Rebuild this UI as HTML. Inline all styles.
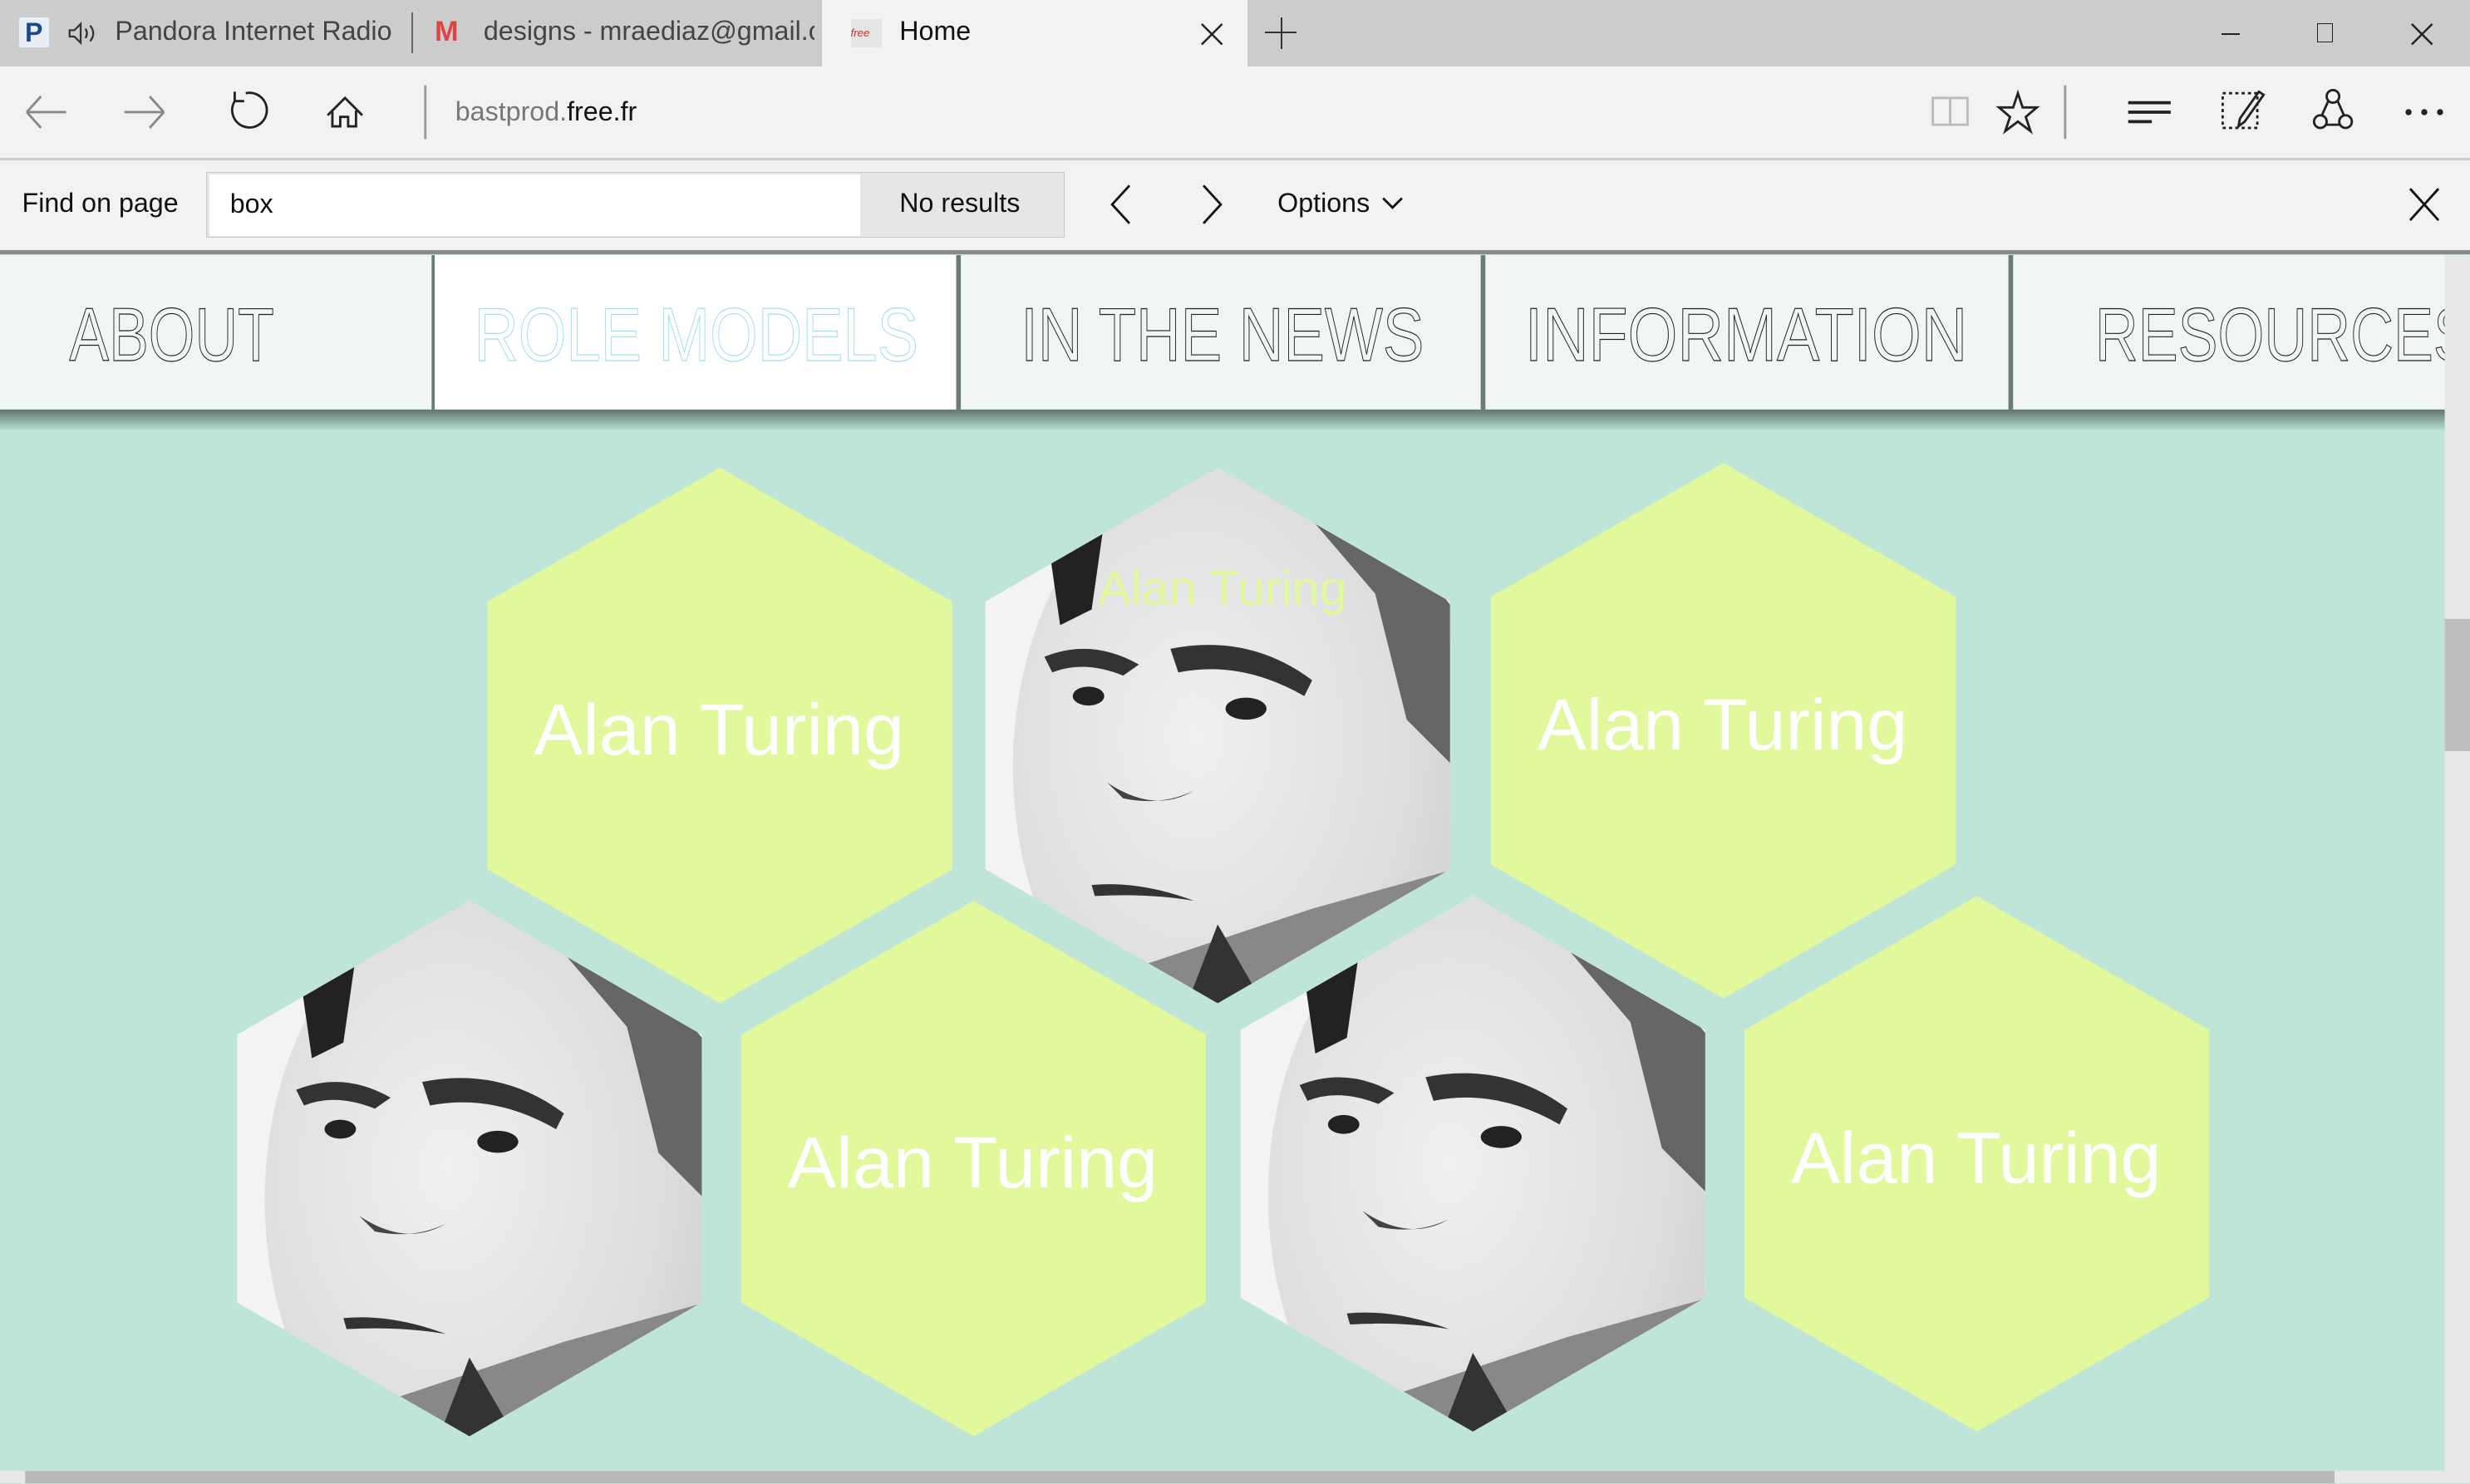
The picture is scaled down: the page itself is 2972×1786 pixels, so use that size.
<!DOCTYPE html>
<html><head><meta charset="utf-8"><style>
html,body{margin:0;padding:0;overflow:hidden;background:#bfe5d8;}
#w{zoom:1.8954;width:1568px;height:942px;position:relative;overflow:hidden;font-family:"Liberation Sans",sans-serif;}
.abs{position:absolute;}
#tabs{left:0;top:0;width:1568px;height:42px;background:#cccccc;}
#tb{left:0;top:42px;width:1568px;height:58px;background:#f2f2f2;border-bottom:2px solid #cdcdcd;}
#find{left:0;top:102px;width:1568px;height:57px;background:#f2f2f2;border-bottom:3px solid #8a8a8a;}
.t{font-size:17px;color:#333;}
</style></head><body><div id="w">
<div id="tabs" class="abs">
 <div class="abs" style="left:12px;top:11px;width:19px;height:19px;background:#e8eef6;color:#1a4a8a;font-weight:bold;font-size:17px;text-align:center;line-height:19px">P</div>
 <svg class="abs" style="left:42px;top:13px" width="20" height="16" fill="none" stroke="#333" stroke-width="1.2"><path d="M2 6h3l4-4v12l-4-4H2z"/><path d="M12 5q2 3 0 6M15 3q4 5 0 10"/></svg>
 <div class="abs t" style="left:73px;top:10px;color:#444">Pandora Internet Radio</div>
 <div class="abs" style="left:261px;top:8px;width:1px;height:26px;background:#666"></div>
 <div class="abs" style="left:276px;top:10px;color:#d44;font-weight:bold;font-size:18px">M</div>
 <div class="abs t" style="left:307px;top:10px;color:#444;width:210px;overflow:hidden;white-space:nowrap">designs - mraediaz@gmail.com</div>
 <div class="abs" style="left:522px;top:0;width:270px;height:42px;background:#f2f2f2"></div>
 <div class="abs" style="left:540px;top:12px;width:20px;height:18px;background:#e5e5e5;color:#c33;font-size:7px;font-style:italic;line-height:18px">free</div>
 <div class="abs t" style="left:571px;top:10px;color:#111">Home</div>
 <svg class="abs" style="left:762px;top:14px" width="16" height="16" stroke="#222" stroke-width="1.3"><path d="M1 1l13 13M14 1L1 14"/></svg>
 <div class="abs" style="left:803px;top:20px;width:20px;height:1px;background:#333"></div>
 <div class="abs" style="left:813px;top:11px;width:1px;height:20px;background:#333"></div>
 <div class="abs" style="left:1410px;top:21px;width:12px;height:1px;background:#222"></div>
 <div class="abs" style="left:1471px;top:15px;width:9px;height:11px;border:1px solid #222"></div>
 <svg class="abs" style="left:1530px;top:14px" width="16" height="16" stroke="#222" stroke-width="1.3"><path d="M1 1l13 13M14 1L1 14"/></svg>
</div>
<div id="tb" class="abs">
 <svg class="abs" style="left:0;top:0" width="1568" height="58" fill="none" stroke="#222" stroke-width="1.5">
  <path d="M17 29h25M17 29l9-10M17 29l9 10" stroke="#888"/>
  <path d="M79 29h25M104 29l-9-10M104 29l-9 10" stroke="#888"/>
  <path d="M149 22a11 11 0 1 0 7-5M149 16v6h6"/>
  <path d="M208 31l11-11 11 11M211 28v10h5v-6h5v6h5v-10"/>
  <path d="M270 12v34" stroke="#999"/>
  <path d="M1227 20h22v17h-22zM1238 20v17" stroke="#bbb"/>
  <path d="M1281 17l3 9h9l-7 6 3 9-8-6-8 6 3-9-7-6h9z"/>
  <path d="M1311 12v34" stroke="#999"/>
  <path d="M1351 23h27M1351 29h27M1351 35h15" stroke-width="2"/>
  <path d="M1411 17h22v22h-22z" stroke-dasharray="2 2"/><path d="M1434 16l-12 17-1 5 4-3 12-17z"/>
  <circle cx="1481" cy="19" r="4"/><circle cx="1473" cy="35" r="4"/><circle cx="1489" cy="35" r="4"/><path d="M1478 22l-4 9M1484 22l4 9M1477 37h8"/>
  <circle cx="1529" cy="29" r="1.2" fill="#222"/><circle cx="1539" cy="29" r="1.2" fill="#222"/><circle cx="1549" cy="29" r="1.2" fill="#222"/>
 </svg>
 <div class="abs t" style="left:289px;top:19px;color:#777">bastprod.<span style="color:#111">free.fr</span></div>
</div>
<div id="find" class="abs">
 <div class="abs t" style="left:14px;top:17px;color:#111">Find on page</div>
 <div class="abs" style="left:131px;top:7px;width:544px;height:41px;background:#e6e6e6;border:1px solid #c8c8c8"></div>
 <div class="abs" style="left:133px;top:9px;width:413px;height:39px;background:#fff"></div>
 <div class="abs t" style="left:146px;top:18px;color:#111">box</div>
 <div class="abs t" style="left:571px;top:17px;color:#111">No results</div>
 <svg class="abs" style="left:0;top:0" width="1568" height="57" fill="none" stroke="#111" stroke-width="1.5">
  <path d="M717 16l-11 12 11 12M764 16l11 12-11 12M878 24l6 6 6-6"/>
  <path d="M1530 18l18 20M1548 18l-18 20"/>
 </svg>
 <div class="abs t" style="left:811px;top:17px;color:#111">Options</div>
</div>
<svg class="abs" style="left:0;top:162px" width="1568" height="780">
 <defs>
  <linearGradient id="sh" x1="0" y1="0" x2="0" y2="1"><stop offset="0" stop-color="#62746e"/><stop offset="1" stop-color="#bfe5d8"/></linearGradient>
  <clipPath id="hx"><polygon points="0,-170 147.5,-85 147.5,85 0,170 -147.5,85 -147.5,-85"/></clipPath>
  <radialGradient id="fg" cx="0.4" cy="0.45" r="0.65"><stop offset="0" stop-color="#f0f0f0"/><stop offset="0.75" stop-color="#dcdcdc"/><stop offset="1" stop-color="#cfcfcf"/></radialGradient>
  <g id="face" clip-path="url(#hx)">
   <rect x="-150" y="-172" width="300" height="344" fill="#f3f3f3"/>
   <ellipse cx="15" cy="20" rx="145" ry="200" fill="url(#fg)"/>
   <path d="M-110 -140 L-70 -150 L-80 -80 L-100 -70z" fill="#222"/>
   <path d="M40 -160 L110 -130 L150 -80 L150 20 L120 -10 L100 -90z" fill="#666"/>
   <path d="M-110 -50 Q-80 -62 -50 -45 L-60 -38 Q-85 -48 -105 -40z" fill="#333"/>
   <path d="M-30 -55 Q20 -65 60 -35 L55 -25 Q15 -48 -25 -40z" fill="#333"/>
   <ellipse cx="-82" cy="-25" rx="10" ry="6" fill="#222"/>
   <ellipse cx="18" cy="-17" rx="13" ry="7" fill="#222"/>
   <path d="M-70 30 Q-40 50 -15 35 Q-35 45 -60 40z" fill="#444"/>
   <path d="M-80 95 Q-50 92 -15 105 Q-45 100 -78 102z" fill="#333"/>
   <path d="M-60 150 L60 110 L150 85 L150 172 L-60 172z" fill="#888"/>
   <path d="M-20 172 L0 120 L30 172z" fill="#333"/>
  </g>
 </defs>
 <rect x="0" y="98" width="1552" height="14" fill="url(#sh)"/>
 <rect x="0" y="0" width="274" height="98" fill="#f1f5f4"/>
 <rect x="274" y="0" width="2" height="98" fill="#6b7c76"/>
 <rect x="276" y="0" width="331" height="98" fill="#fff"/>
 <rect x="607" y="0" width="3" height="98" fill="#6b7c76"/>
 <rect x="610" y="0" width="330" height="98" fill="#f1f5f4"/>
 <rect x="940" y="0" width="3" height="98" fill="#6b7c76"/>
 <rect x="943" y="0" width="332" height="98" fill="#f1f5f4"/>
 <rect x="1275" y="0" width="3" height="98" fill="#6b7c76"/>
 <rect x="1278" y="0" width="274" height="98" fill="#f1f5f4"/>
 <g font-family="Liberation Sans" font-size="48" fill="none" stroke-width="0.6">
  <text x="44" y="67" textLength="130" lengthAdjust="spacingAndGlyphs" stroke="#222">ABOUT</text>
  <text x="301" y="67" textLength="282" lengthAdjust="spacingAndGlyphs" stroke="#9fdfe6">ROLE MODELS</text>
  <text x="648" y="67" textLength="256" lengthAdjust="spacingAndGlyphs" stroke="#222">IN THE NEWS</text>
  <text x="968" y="67" textLength="281" lengthAdjust="spacingAndGlyphs" stroke="#222">INFORMATION</text>
  <text x="1330" y="67" textLength="240" lengthAdjust="spacingAndGlyphs" stroke="#222">RESOURCES</text>
 </g>
 <rect x="1552" y="0" width="16" height="780" fill="#e8e8e8"/>
 <rect x="1552" y="231" width="16" height="84" fill="#bdbdbd"/>
 <rect x="0" y="772" width="1552" height="8" fill="#e8e8e8"/>
 <rect x="16" y="772" width="1466" height="8" fill="#b8b8b8"/>
 <g transform="translate(0,-162)">
  <g fill="#e1f99c">
   <polygon transform="translate(457,467)" points="0,-170 147.5,-85 147.5,85 0,170 -147.5,85 -147.5,-85"/>
   <polygon transform="translate(1094,464)" points="0,-170 147.5,-85 147.5,85 0,170 -147.5,85 -147.5,-85"/>
   <polygon transform="translate(618,742)" points="0,-170 147.5,-85 147.5,85 0,170 -147.5,85 -147.5,-85"/>
   <polygon transform="translate(1255,739)" points="0,-170 147.5,-85 147.5,85 0,170 -147.5,85 -147.5,-85"/>
  </g>
  <use href="#face" transform="translate(773,467)"/>
  <use href="#face" transform="translate(298,742)"/>
  <use href="#face" transform="translate(935,739)"/>
  <g font-family="Liberation Sans" font-size="46" fill="#fff">
   <text x="339" y="479" textLength="235" lengthAdjust="spacingAndGlyphs">Alan Turing</text>
   <text x="976" y="476" textLength="235" lengthAdjust="spacingAndGlyphs">Alan Turing</text>
   <text x="500" y="754" textLength="235" lengthAdjust="spacingAndGlyphs">Alan Turing</text>
   <text x="1137" y="751" textLength="235" lengthAdjust="spacingAndGlyphs">Alan Turing</text>
  </g>
  <text x="697" y="384" font-family="Liberation Sans" font-size="31" fill="#e1f99c" textLength="158" lengthAdjust="spacingAndGlyphs">Alan Turing</text>
 </g>
</svg>
</div></body></html>
